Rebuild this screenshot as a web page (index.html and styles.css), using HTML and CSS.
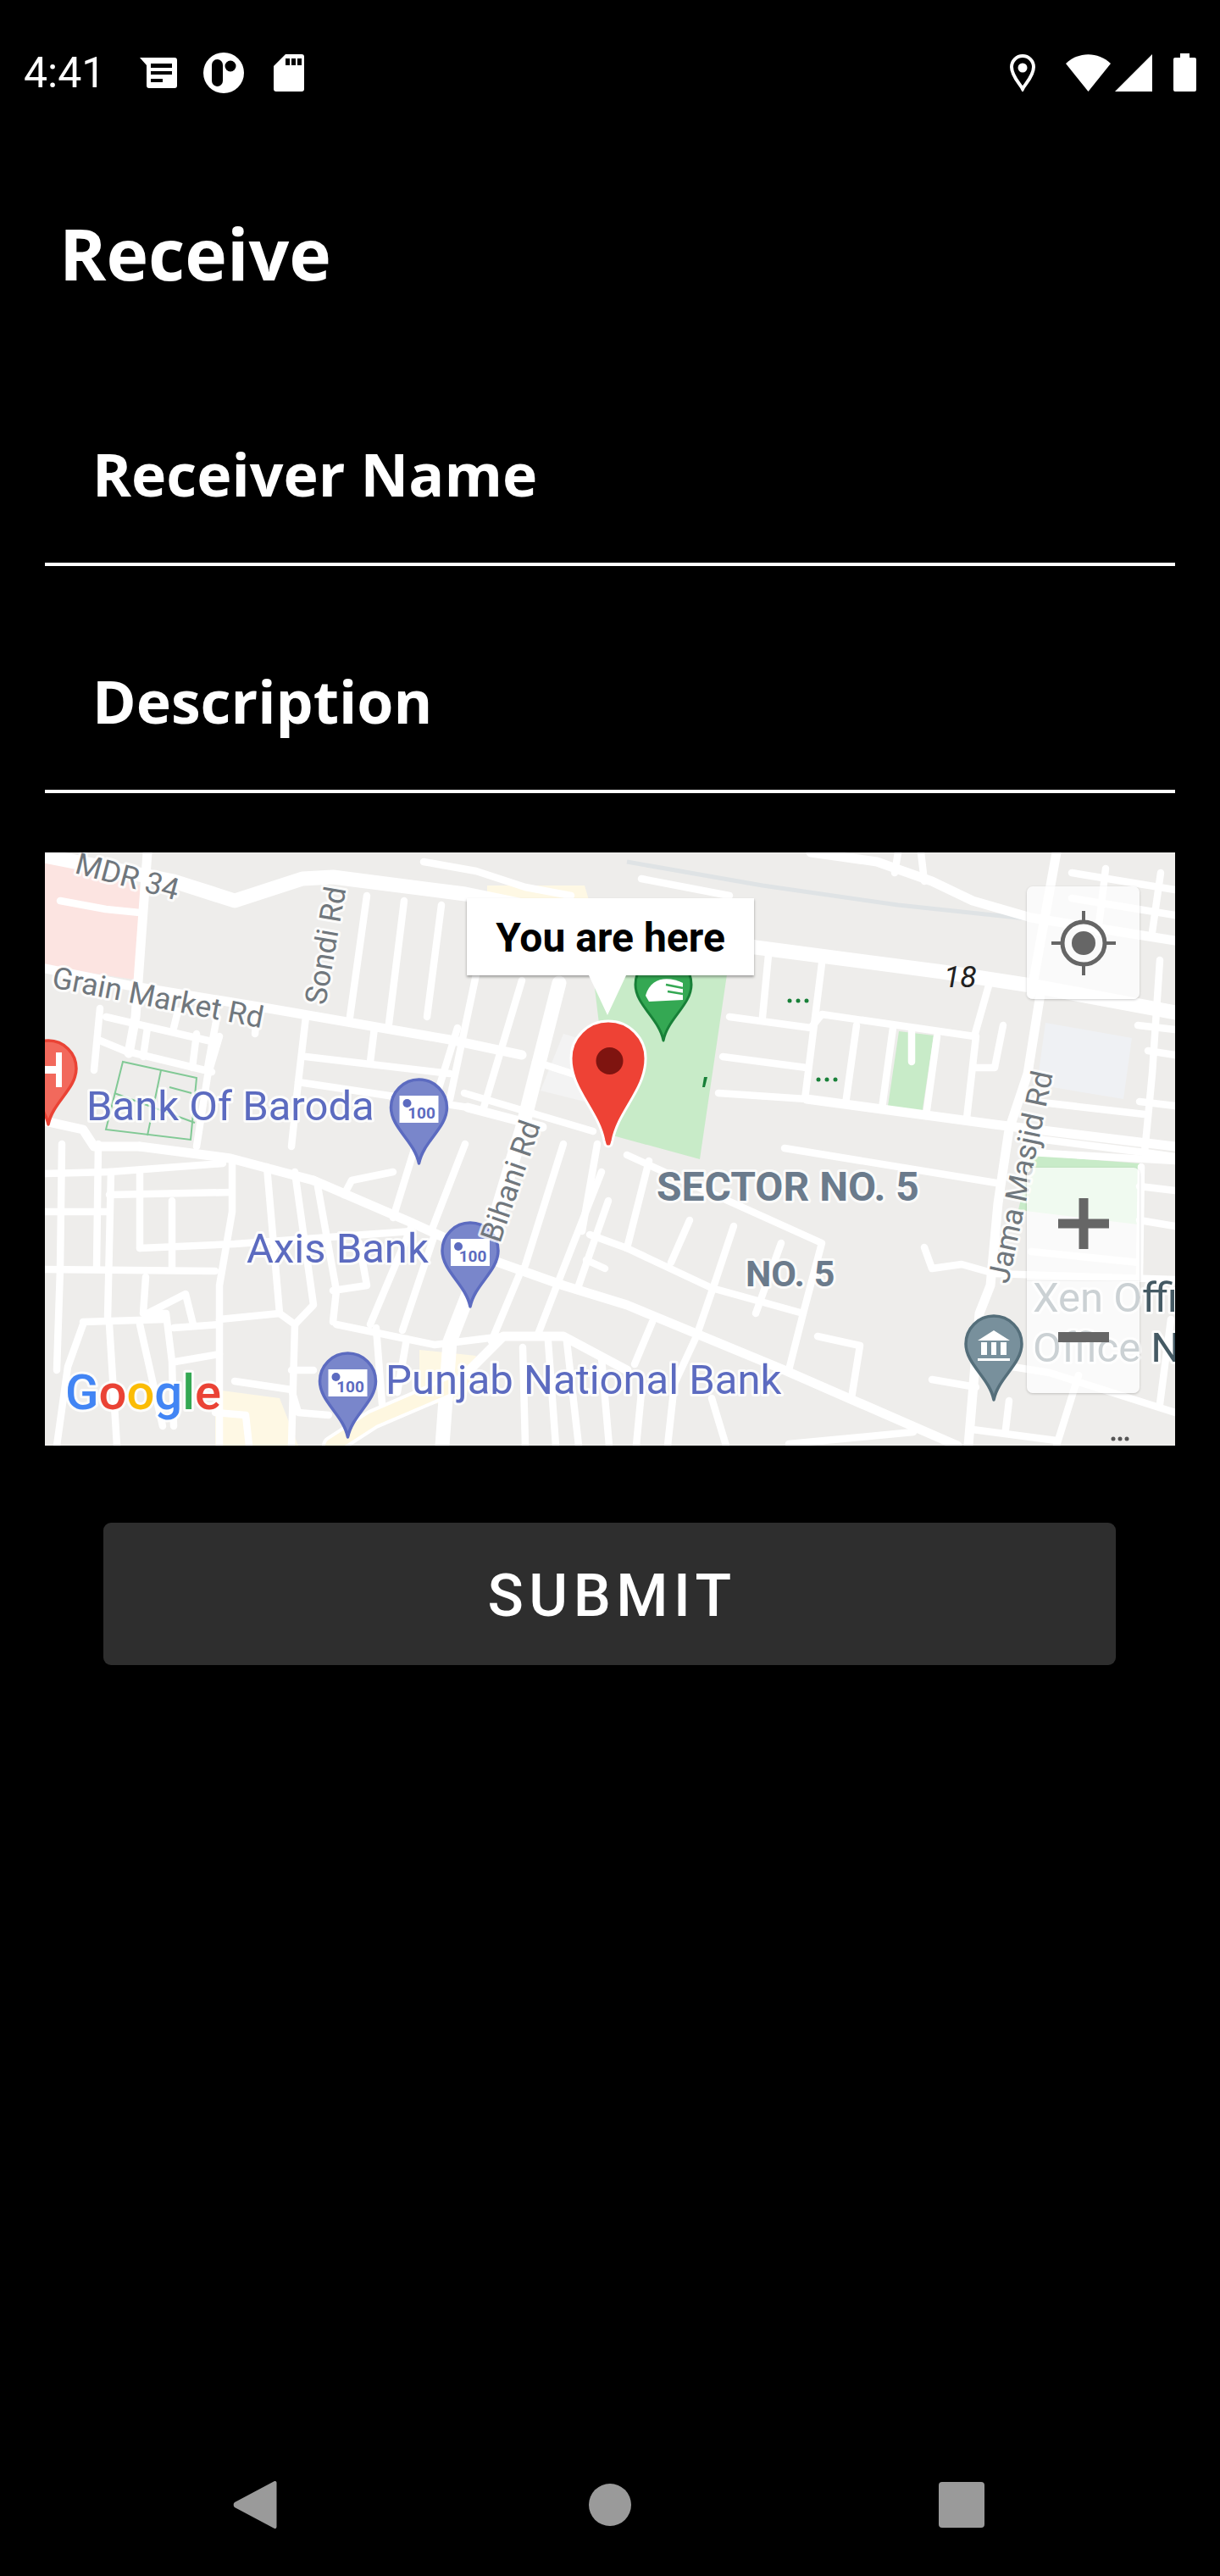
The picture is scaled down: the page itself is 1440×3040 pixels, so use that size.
FILE: index.html
```html
<!DOCTYPE html>
<html lang="en">
<head>
<meta charset="utf-8">
<title>Receive</title>
<link rel="stylesheet" href="styles.css">
</head>
<body>
<div class="screen">
  <header class="status">
    <div class="status-left">
      <span class="time">4:41</span>
      <svg class="ic-news" width="44" height="36" viewBox="0 0 44 36"><path class="w" d="M0 0H41a3 3 0 0 1 3 3V33a3 3 0 0 1-3 3H11a3 3 0 0 1-3-3V9z"/><path class="k" d="M13 7H38V12H13zM13 16H38V20H13zM13 25H27V29H13z"/></svg>
      <svg class="ic-circle" width="48" height="48" viewBox="0 0 48 48"><circle class="w" cx="24" cy="24" r="24"/><rect class="k" x="10" y="8" width="13" height="32" rx="6.5"/><circle class="k" cx="32" cy="16" r="6.5"/></svg>
      <svg class="ic-sd" width="36" height="44" viewBox="0 0 36 44"><path class="w" d="M14 0H33a3 3 0 0 1 3 3V41a3 3 0 0 1-3 3H3a3 3 0 0 1-3-3V14z"/><path class="k" d="M14 5H19V13H14zM21 5H26V13H21zM28 5H33V13H28z"/></svg>
    </div>
    <div class="status-right">
      <svg class="ic-loc" width="30" height="44" viewBox="0 0 30 44"><path class="ol" d="M15 41C12 35 2 26 2 15a13 13 0 0 1 26 0C28 26 18 35 15 41z"/><circle class="w" cx="15" cy="16" r="5.5"/></svg>
      <svg class="ic-wifi" width="53" height="44" viewBox="0 0 53 44"><path class="w" d="M26.5 44L0 11C15 -3.500 38 -3.500 53 11z"/></svg>
      <svg class="ic-sig" width="44" height="44" viewBox="0 0 44 44"><path class="w" d="M44 0V44H0z"/></svg>
      <svg class="ic-bat" width="27" height="45" viewBox="0 0 27 45"><path class="w" d="M8 0H19V5H25a2 2 0 0 1 2 2V43a2 2 0 0 1-2 2H2a2 2 0 0 1-2-2V7a2 2 0 0 1 2-2H8z"/></svg>
    </div>
  </header>

  <main class="content">
    <h1 class="title">Receive</h1>
    <div class="field">Receiver Name</div>
    <div class="field">Description</div>

    <div class="map">
      <svg class="map-svg" width="1334" height="700" viewBox="53 1006 1334 700">
        <defs>
          <path id="pin" d="M0 0C-5 -26 -33 -42 -33 -66A33 33 0 1 1 33 -66C33 -42 5 -26 0 0z"/>
          <g id="note">
            <rect class="note-bg" x="-23" y="-80" width="46" height="32"/>
            <circle class="note-dot" cx="-14" cy="-71" r="5"/>
            <text class="note-t" x="3" y="-53">100</text>
          </g>
        </defs>
        <rect class="land" x="53" y="1006" width="1334" height="700"/>
        <path class="pink" d="M53 1017L165 1045V1157L53 1140z"/>
        <path class="park" d="M700 1150H858L826 1368L723 1340z"/>
        <path class="park" d="M1061 1217L1102 1222L1088 1315L1047 1312z"/>
        <path class="park" d="M1217 1363L1345 1373L1343 1445L1202 1428z"/>
        <path class="pale" d="M1234 1207L1336 1225L1326 1297L1224 1280z"/>
        <path class="light" d="M638 1287L665 1220L705 1232L690 1300z"/>
        <path class="yellow" d="M254 1640L330 1650L352 1706H254z"/>
        <path class="yellow" d="M495 1593L562 1600L550 1650L495 1660z"/>
        <path class="yellow" d="M575 1045L690 1045L695 1062H575z"/>
        <polyline class="rail" points="740,1017 900,1045 1060,1068 1220,1085 1387,1107"/>

        <g class="roads r16">
          <polyline points="53,1010 205,1040 277,1063 357,1037 393,1035 549,1055 720,1090 892,1118 1113,1147 1217,1163 1387,1195"/>
          <polyline points="660,1160 616,1333 575,1470 531,1583 522,1706"/>
        </g>
        <g class="roads r12">
          <polyline points="370,1393 486,1443 589,1490 665,1517 740,1540 926,1617 1130,1706"/>
          <polyline points="174,1006 160,1200 152,1243"/>
          <polyline points="53,1143 152,1163 317,1190 531,1227 616,1245"/>
          <polyline points="1228,1173 1213,1267 1191,1333 1178,1420 1169,1517 1156,1550 1143,1706"/>
          <polyline points="1247,1006 1217,1173"/>
          <polyline points="952,1297 1174,1327 1387,1353"/>
          <polyline points="165,1353 272,1367 370,1393"/>
          <polyline points="53,1323 98,1333 111,1353 165,1353"/>
          <polyline points="552,1307 640,1330"/>
          <polyline points="957,1006 1035,1017 1100,1040 1148,1063 1217,1083 1387,1110"/>
          <polyline points="531,1640 594,1577 665,1577 740,1617"/>
          <polyline class="wide" points="392,1706 440,1675 531,1636"/>
          <polyline class="yel" points="392,1706 440,1675 531,1636"/>
        </g>
        <g class="roads r9">
          <polyline points="361,1200 352,1277 344,1353"/>
          <polyline points="433,1057 413,1200"/><polyline points="477,1063 459,1208"/><polyline points="521,1068 504,1200"/>
          <polyline points="562,1150 531,1297"/><polyline points="616,1157 571,1307"/>
          <polyline points="361,1247 531,1267"/><polyline points="352,1277 553,1307"/>
          <polyline points="442,1213 437,1253"/><polyline points="540,1213 513,1300"/>
          <polyline points="118,1190 111,1263"/><polyline points="125,1200 254,1230"/><polyline points="118,1228 147,1240 250,1265"/>
          <polyline points="210,1193 205,1213"/><polyline points="174,1213 169,1247"/><polyline points="232,1220 227,1260"/><polyline points="256,1200 245,1260"/>
          <polyline points="259,1223 245,1270 232,1353"/><polyline points="303,1200 301,1220"/>
          <polyline points="861,1200 957,1213 970,1197 1150,1223"/><polyline points="853,1247 952,1260"/><polyline points="848,1290 952,1297"/>
          <polyline points="907,1127 900,1200"/><polyline points="970,1137 950,1297"/>
          <polyline points="1011,1210 998,1303"/><polyline points="1054,1213 1041,1308"/><polyline points="1106,1223 1093,1317"/><polyline points="1152,1223 1141,1320"/><polyline points="1167,1163 1150,1223"/>
          <polyline points="1184,1210 1174,1260 1152,1260"/><polyline points="1076,1217 1076,1253"/>
          <polyline points="1369,1133 1360,1267 1351,1360"/><polyline points="1343,1210 1387,1215"/><polyline points="1355,1240 1387,1245"/><polyline points="1345,1300 1387,1305"/>
          <polyline points="1221,1300 1351,1315"/><polyline points="1217,1343 1351,1360 1387,1365"/>
          <polyline points="1265,1030 1387,1050"/><polyline points="1265,1060 1387,1080"/><polyline points="1305,1025 1296,1100"/><polyline points="1370,1030 1360,1100"/><polyline points="1060,1006 1056,1030"/><polyline points="1087,1006 1091,1040"/>
          <polyline points="740,1363 762,1373 970,1467 948,1550 931,1617"/>
          <polyline points="740,1473 840,1520 948,1550"/><polyline points="766,1370 740,1473"/><polyline points="814,1440 792,1490"/><polyline points="866,1447 844,1513"/><polyline points="922,1467 892,1550"/>
          <polyline points="844,1513 822,1577 796,1633 788,1706"/><polyline points="770,1560 749,1610"/><polyline points="840,1650 857,1706"/><polyline points="757,1643 751,1706"/>
          <polyline points="1091,1472 1100,1497 1135,1492 1174,1503 1387,1510"/><polyline points="965,1577 1015,1588 1005,1650"/><polyline points="1100,1628 1152,1637"/>
          <polyline points="1195,1613 1239,1620 1387,1667"/><polyline points="1273,1623 1247,1706"/><polyline points="1382,1557 1369,1657"/>
          <polyline points="1191,1653 1187,1687"/><polyline points="1148,1687 1247,1700"/><polyline points="1078,1690 931,1704"/>
          <polyline points="926,1355 1182,1397"/><polyline points="1217,1360 1387,1370"/><polyline points="1347,1377 1345,1507"/><polyline points="1345,1400 1387,1405"/><polyline points="1345,1440 1387,1447"/><polyline points="1217,1477 1345,1490"/>
          <polyline points="129,1383 263,1373"/><polyline points="129,1410 272,1407"/><polyline points="53,1498 254,1500"/><polyline points="165,1473 277,1468 486,1453"/>
          <polyline points="53,1385 129,1383"/><polyline points="53,1430 129,1430"/>
          <polyline points="73,1350 71,1497 67,1617"/><polyline points="116,1350 114,1497"/><polyline points="131,1383 127,1557"/><polyline points="165,1383 165,1473"/><polyline points="203,1417 203,1497"/>
          <polyline points="274,1367 274,1430 259,1517 259,1706"/><polyline points="315,1377 330,1550 348,1563 344,1706"/><polyline points="348,1383 370,1540 348,1563"/><polyline points="375,1400 397,1523 393,1560"/>
          <polyline points="259,1557 330,1550"/><polyline points="174,1550 219,1527 228,1563"/><polyline points="172,1507 169,1550 196,1550 203,1607 205,1683"/><polyline points="205,1567 259,1563"/><polyline points="207,1607 259,1598"/>
          <polyline points="98,1560 194,1557"/><polyline points="129,1563 138,1706"/><polyline points="98,1563 80,1613 67,1706"/><polyline points="165,1563 192,1683"/>
          <polyline points="397,1563 513,1587 594,1577"/><polyline points="393,1523 433,1517 424,1467"/><polyline points="464,1383 415,1393 406,1410"/>
          <polyline points="491,1350 464,1437"/><polyline points="549,1350 509,1453"/><polyline points="437,1563 486,1447"/><polyline points="475,1570 513,1457"/>
          <polyline points="580,1583 616,1497"/><polyline points="634,1577 660,1510 710,1383"/><polyline points="683,1517 718,1417"/><polyline points="665,1350 620,1493"/><polyline points="705,1350 687,1453"/>
          <polyline points="696,1457 740,1473"/><polyline points="692,1487 714,1497"/>
          <polyline points="444,1567 451,1657"/><polyline points="480,1580 469,1643"/><polyline points="617,1590 620,1706"/><polyline points="647,1583 656,1706"/><polyline points="669,1583 683,1706"/><polyline points="710,1603 719,1706"/>
          <polyline points="277,1630 344,1640 352,1667 388,1670"/><polyline points="344,1617 370,1617"/><polyline points="254,1667 290,1670 294,1706"/>
          <polyline points="71,1063 125,1073 165,1077"/><polyline points="500,1017 562,1028 620,1047 674,1057"/><polyline points="757,1037 861,1057"/>
          <polyline points="632,1253 700,1275"/><polyline points="548,1290 700,1335"/>
        </g>

        <g class="lots">
          <path d="M145 1253L232 1272L225 1345L125 1333z"/>
          <path d="M190 1263L174 1340M135 1290L230 1325M200 1283L226 1290"/>
        </g>

        <text class="lbl grey" transform="translate(87,1030) rotate(15)">MDR 34</text>
        <text class="lbl grey" transform="translate(60,1165) rotate(11)">Grain Market Rd</text>
        <text class="lbl grey" transform="translate(384,1187) rotate(-80)">Sondi Rd</text>
        <text class="lbl grey" transform="translate(1190,1516) rotate(-78)">Jama Masjid Rd</text>
        <text class="lbl num" x="1114" y="1165">18</text>
        <text class="poi blue" x="102" y="1322">Bank Of Baroda</text>
        <text class="poi blue" x="291" y="1490">Axis Bank</text>
        <text class="poi blue" x="455" y="1645">Punjab National Bank</text>
        <text class="area area-lg" x="775" y="1417">SECTOR NO. 5</text>
        <text class="area" x="880" y="1518">NO. 5</text>
        <text class="poi slate" x="1219" y="1548">Xen Office</text>
        <text class="poi slate" x="1219" y="1607">Office No</text>

        <g class="dots-g">
          <circle cx="932" cy="1181" r="2.500"/><circle cx="942" cy="1181" r="2.500"/><circle cx="952" cy="1181" r="2.500"/>
          <circle cx="966" cy="1274" r="2.500"/><circle cx="976" cy="1274" r="2.500"/><circle cx="986" cy="1274" r="2.500"/>
          <path d="M831 1271L835 1271L832 1283L829 1283z"/>
        </g>
        <g class="dots-d">
          <circle cx="1314" cy="1698" r="2.500"/><circle cx="1322" cy="1698" r="2.500"/><circle cx="1330" cy="1698" r="2.500"/>
        </g>

        <use href="#pin" class="pin-red" x="57" y="1327"/>
        <path class="pin-h" d="M53 1258H66V1242H73V1283H66V1267H53z"/>
        <use href="#pin" class="pin-blue" x="494.500" y="1373"/>
        <use href="#note" x="494.500" y="1373"/>
        <use href="#pin" class="pin-blue" x="555" y="1542"/>
        <use href="#note" x="555" y="1542"/>
        <use href="#pin" class="pin-blue" x="410.500" y="1696"/>
        <use href="#note" x="410.500" y="1696"/>
        <use href="#pin" class="pin-slate" x="1173" y="1652"/>
        <path class="wf" d="M1154 1582L1173 1570L1192 1582zM1158 1584H1165V1599H1158zM1170 1584H1176V1599H1170zM1181 1584H1188V1599H1181zM1154 1603H1192V1606H1154z"/>
        <use href="#pin" class="pin-green" x="783" y="1228"/>
        <path class="wf" d="M762 1175C768 1152 790 1152 806 1160V1180L766 1182z"/>
        <path class="leaf" d="M786 1162L806 1166M788 1170L806 1173"/>
        <path class="marker" d="M718 1353C714 1353 714 1350 713 1346C706 1310 674 1286 674 1249A44 44 0 1 1 762 1249C762 1286 730 1310 723 1346C722 1350 722 1353 718 1353z"/>
        <ellipse class="marker-dot" cx="719.500" cy="1252" rx="16" ry="16"/>

        <text class="lbl grey" transform="translate(590,1468) rotate(-71)">Bihani Rd</text>
        <text class="glogo" x="77" y="1663"><tspan class="g-b">G</tspan><tspan class="g-r">o</tspan><tspan class="g-y">o</tspan><tspan class="g-b">g</tspan><tspan class="g-g">l</tspan><tspan class="g-r">e</tspan></text>
      </svg>

      <div class="callout">You are here</div>

      <div class="ctl ctl-loc">
        <svg width="76" height="76" viewBox="0 0 76 76"><circle class="loc-ring" cx="38" cy="38" r="25"/><circle class="loc-dot" cx="38" cy="38" r="14"/><path class="loc-tick" d="M38 0V13M38 63V76M0 38H13M63 38H76"/></svg>
      </div>
      <div class="ctl ctl-zoom">
        <div class="zoom-cell"><svg width="60" height="60" viewBox="0 0 60 60"><path class="zoom-mark" d="M24.500 0H35.500V24.500H60V35.500H35.500V60H24.500V35.500H0V24.500H24.500z"/></svg></div>
        <div class="zoom-cell"><svg width="60" height="12" viewBox="0 0 60 12"><rect class="zoom-mark" width="60" height="12"/></svg></div>
      </div>
    </div>

    <button class="submit" type="button">SUBMIT</button>
  </main>

  <nav class="navbar">
    <svg width="52" height="58" viewBox="0 0 52 58"><path class="nav" d="M49 1a2 2 0 0 1 2.500 2V55a2 2 0 0 1-2.500 2L2 32a4 4 0 0 1 0-6z"/></svg>
    <svg width="50" height="50" viewBox="0 0 50 50"><circle class="nav" cx="25" cy="25" r="25"/></svg>
    <svg width="54" height="54" viewBox="0 0 54 54"><rect class="nav" width="54" height="54" rx="4"/></svg>
  </nav>
</div>
</body>
</html>
```

FILE: styles.css
```css
* { box-sizing: border-box; }
html, body { margin: 0; padding: 0; background: #000; }
.screen { position: relative; width: 1440px; height: 3040px; background: #000; color: #fff; display: flex; flex-direction: column; overflow: hidden; }

.status { height: 171px; padding: 0 28px; display: flex; align-items: center; justify-content: space-between; flex: none; }
.status-left, .status-right { display: flex; align-items: center; }
.time { font: 400 50px/1 Roboto, sans-serif; width: 137px; }
.ic-circle { margin-left: 31px; }
.ic-sd { margin-left: 35px; }
.ic-wifi { margin-left: 36px; }
.ic-sig { margin-left: 5px; }
.ic-bat { margin-left: 25px; }
.status-right svg { display: block; }
.w { fill: #fff; }
.k { fill: #000; }
.ol { fill: none; stroke: #fff; stroke-width: 4; }

.content { flex: 1; display: flex; flex-direction: column; }
.title { margin: 71px 0 0 70px; font: 700 84px/114px "Open Sans", sans-serif; }
.field { margin: 0 53px; height: 268px; border-bottom: 4px solid #fff; padding: 0 0 57px 56px; font: 700 69.800px/96px "Open Sans", sans-serif; display: flex; align-items: flex-end; }
.field:first-of-type { height: 312px; }

.map { position: relative; margin: 70px 53px 0; width: 1334px; height: 700px; overflow: hidden; }
.map-svg { display: block; }
.land { fill: #eeedeb; }
.pink { fill: #fce4e1; }
.park { fill: #c8ebc8; }
.pale { fill: #eff1f4; }
.light { fill: #f3f3f3; }
.yellow { fill: #fef8e4; }
.rail { fill: none; stroke: #dfe3e5; stroke-width: 5; }
.roads polyline { fill: none; stroke: #fff; stroke-linejoin: round; stroke-linecap: round; }
.r16 polyline { stroke-width: 17; }
.r12 polyline { stroke-width: 11; }
.r12 polyline.wide { stroke-width: 24; }
.r12 polyline.yel { stroke: #fef7e0; stroke-width: 16; }
.r9 polyline { stroke-width: 8.500; }
.lots path { fill: none; stroke: #81c995; stroke-width: 2; }

.lbl, .poi, .area { paint-order: stroke; stroke-linejoin: round; stroke: rgba(255, 255, 255, .8); stroke-width: 6px; font-family: Roboto, sans-serif; }
.lbl { font-size: 35.5px; }
.grey { fill: #70777d; }
.num { fill: #222; font-style: italic; stroke-width: 0; }
.poi { font-size: 49px; }
.blue { fill: #5c6bc0; }
.slate { fill: #455a64; }
.area { font-size: 43px; font-weight: 700; fill: #6b7b8c; }
.area-lg { font-size: 48px; }

.dots-g { fill: #188038; }
.dots-d { fill: #555; }
.pin-red { fill: #f2695c; stroke: #ea4335; stroke-width: 3.500; stroke-linejoin: round; }
.pin-h { fill: #fff; }
.pin-blue { fill: #7986cb; stroke: #5c6bc0; stroke-width: 3.500; stroke-linejoin: round; }
.pin-slate { fill: #78909c; stroke: #546e7a; stroke-width: 3.500; stroke-linejoin: round; }
.pin-green { fill: #34a853; stroke: #188038; stroke-width: 3; stroke-linejoin: round; }
.wf { fill: #fff; }
.leaf { fill: none; stroke: #34a853; stroke-width: 2.500; }
.note-bg { fill: #fff; }
.note-dot { fill: #5c6bc0; }
.note-t { fill: #5c6bc0; font: 700 19px Roboto, sans-serif; text-anchor: middle; }
.marker { fill: #ee4235; stroke: #fff; stroke-width: 3; stroke-linejoin: round; }
.marker-dot { fill: #7f1410; }

.glogo { font: 500 58px Roboto, sans-serif; paint-order: stroke; stroke: rgba(255, 255, 255, .8); stroke-width: 6px; stroke-linejoin: round; }
.g-b { fill: #4285f4; }
.g-r { fill: #ea4335; }
.g-y { fill: #fbbc05; }
.g-g { fill: #34a853; }

.callout { position: absolute; left: 498px; top: 54px; width: 339px; height: 91px; background: #fff; color: #000; font: 700 48px/93px Roboto, sans-serif; text-align: center; box-shadow: 0 2px 3px rgba(0, 0, 0, .35); }
.callout::after { content: ""; position: absolute; left: 144px; top: 91px; border-left: 22px solid transparent; border-right: 22px solid transparent; border-top: 47px solid #fff; }

.ctl { position: absolute; left: 1159px; width: 133px; background: rgba(255, 255, 255, .72); border-radius: 7px; box-shadow: 0 1px 3px rgba(0, 0, 0, .2); display: flex; flex-direction: column; }
.ctl-loc { top: 40px; height: 133px; align-items: center; justify-content: center; }
.ctl-zoom { top: 372px; height: 266px; }
.zoom-cell { flex: 1; display: flex; align-items: center; justify-content: center; }
.zoom-cell:first-child { border-bottom: 1px solid rgba(0, 0, 0, .04); }
.zoom-mark { fill: #666; }
.loc-ring { fill: none; stroke: #666; stroke-width: 5; }
.loc-dot { fill: #666; }
.loc-tick { stroke: #666; stroke-width: 4; fill: none; }

.submit { margin: 91px 0 0 122px; width: 1195px; height: 168px; padding: 3px 0 0 6px; background: #2e2e2e; color: #fff; border: 0; border-radius: 9px; font: 500 70px/1 Roboto, sans-serif; letter-spacing: 6.5px; }

.navbar { position: absolute; top: 2927px; left: 0; width: 1440px; height: 58px; display: flex; align-items: center; }
.nav { fill: #9a9a9a; }
.navbar svg:nth-child(1) { margin-left: 275px; }
.navbar svg:nth-child(2) { margin-left: 368px; }
.navbar svg:nth-child(3) { margin-left: 363px; }
```
